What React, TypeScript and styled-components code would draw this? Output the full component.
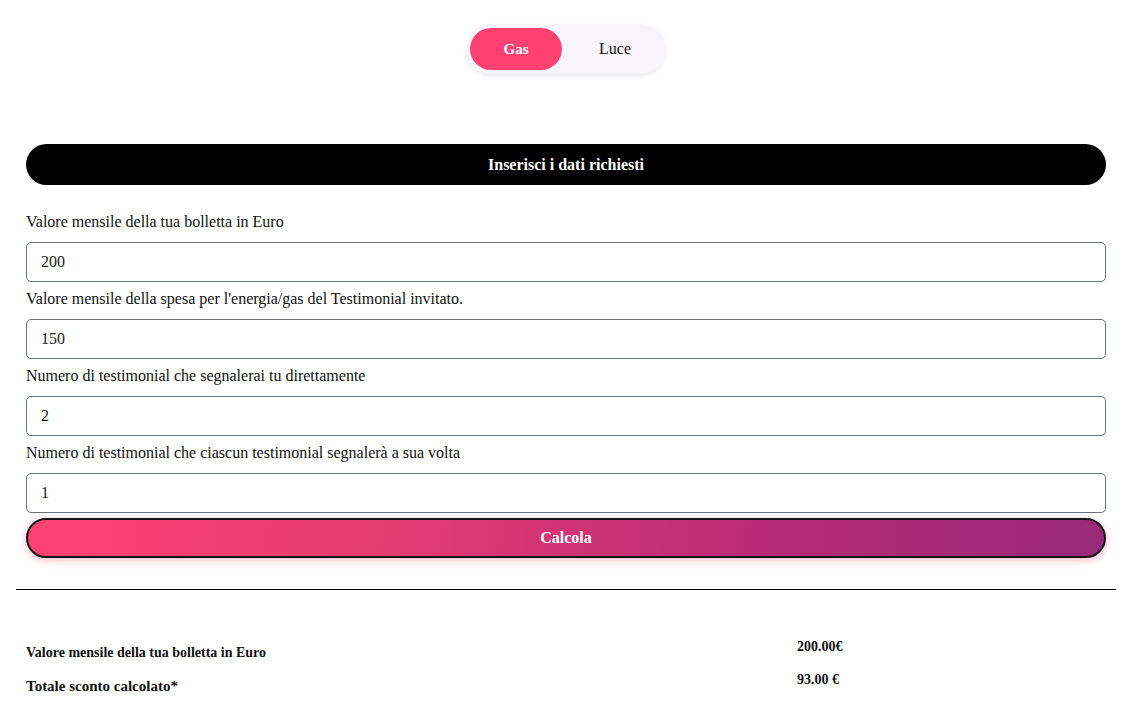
import React, { useState } from 'react';
import styled, { createGlobalStyle } from 'styled-components';

const GlobalStyle = createGlobalStyle`
  body {
    margin: 0;
    background: #fff;
    font-family: "Liberation Serif", "Times New Roman", serif;
    color: #111;
  }
`;

interface IField {
  label: string;
  value: string;
}

const fields: IField[] = [
  { label: 'Valore mensile della tua bolletta in Euro', value: '200' },
  { label: "Valore mensile della spesa per l'energia/gas del Testimonial invitato.", value: '150' },
  { label: 'Numero di testimonial che segnalerai tu direttamente', value: '2' },
  { label: 'Numero di testimonial che ciascun testimonial segnalerà a sua volta', value: '1' },
];

export default function App() {
  const [mode, setMode] = useState<'gas' | 'luce'>('gas');

  return (
    <StyledPage>
      <GlobalStyle />
      <StyledForm>
        <StyledToggleRow>
          <StyledToggle>
            <StyledToggleButton $active={mode === 'gas'} $width={92} onClick={() => setMode('gas')}>
              Gas
            </StyledToggleButton>
            <StyledToggleButton $active={mode === 'luce'} $width={100} onClick={() => setMode('luce')}>
              Luce
            </StyledToggleButton>
          </StyledToggle>
        </StyledToggleRow>

        <StyledBanner>Inserisci i dati richiesti</StyledBanner>

        <StyledFields>
          {fields.map((f) => (
            <StyledField key={f.label}>
              <StyledLabel>{f.label}</StyledLabel>
              <StyledInput defaultValue={f.value} />
            </StyledField>
          ))}
        </StyledFields>

        <StyledSubmit>Calcola</StyledSubmit>
      </StyledForm>

      <StyledRule />

      <StyledResults>
        <StyledResultRow>
          <StyledResultLabel $size={14}>Valore mensile della tua bolletta in Euro</StyledResultLabel>
          <StyledResultValue>200.00€</StyledResultValue>
        </StyledResultRow>
        <StyledResultRow>
          <StyledResultLabel $size={15}>Totale sconto calcolato*</StyledResultLabel>
          <StyledResultValue>93.00 €</StyledResultValue>
        </StyledResultRow>
      </StyledResults>
    </StyledPage>
  );
}

const StyledPage = styled.div`
  width: 1139px;
  padding-top: 24px;
`;

const StyledForm = styled.div`
  width: 1080px;
  margin-left: 26px;
`;

const StyledToggleRow = styled.div`
  display: flex;
  justify-content: center;
  margin-bottom: 70px;
`;

const StyledToggle = styled.div`
  display: flex;
  padding: 4px;
  border-radius: 26px;
  background-color: #f7f5f9;
  box-shadow: 0 2px 4px rgba(0, 0, 0, 0.08);
`;

const StyledToggleButton = styled.button<{ $active: boolean; $width: number }>`
  width: ${(p) => p.$width}px;
  height: 42px;
  padding: ${(p) => (p.$active ? '0' : '0 0 0 6px')};
  border: none;
  border-radius: 21px;
  font-family: inherit;
  font-size: ${(p) => (p.$active ? '15px' : '16px')};
  font-weight: ${(p) => (p.$active ? 700 : 400)};
  color: ${(p) => (p.$active ? '#fff' : '#111')};
  background-color: ${(p) => (p.$active ? '#ff4172' : 'transparent')};
  cursor: pointer;
`;

const StyledBanner = styled.div`
  height: 41px;
  border-radius: 21px;
  background-color: #000;
  color: #fff;
  font-size: 16px;
  font-weight: 700;
  display: flex;
  align-items: center;
  justify-content: center;
`;

const StyledFields = styled.div`
  padding-top: 28px;
`;

const StyledField = styled.div`
  display: flex;
  flex-direction: column;
`;

const StyledLabel = styled.label`
  font-size: 16px;
  line-height: 18px;
  margin-bottom: 11px;
`;

const StyledInput = styled.input`
  box-sizing: border-box;
  height: 40px;
  padding: 0 14px;
  border: 1px solid #6b717b;
  border-radius: 5px;
  font-family: inherit;
  font-size: 16px;
  color: #222;
  margin-bottom: 8px;
  outline: none;
`;

const StyledSubmit = styled.button`
  display: block;
  width: 100%;
  height: 40px;
  margin-top: -3px;
  border: 2px solid #151515;
  border-radius: 20px;
  background: linear-gradient(100deg, #ff4273 0%, #e23b73 35%, #b62a77 70%, #982a7a 100%);
  box-shadow: 0 2px 8px rgba(255, 100, 140, 0.45);
  color: #fff;
  font-family: inherit;
  font-size: 16px;
  font-weight: 700;
  cursor: pointer;
`;

const StyledRule = styled.hr`
  width: 1100px;
  margin: 31px 0 0 16px;
  border: none;
  border-top: 1px solid #000;
`;

const StyledResults = styled.div`
  margin-left: 26px;
  padding-top: 48px;
  display: flex;
  flex-direction: column;
  gap: 9px;
`;

const StyledResultRow = styled.div`
  display: grid;
  grid-template-columns: 771px auto;
  align-items: start;
`;

const StyledResultLabel = styled.div<{ $size: number }>`
  font-size: ${(p) => p.$size}px;
  font-weight: 700;
  line-height: 18px;
  padding-top: 6px;
`;

const StyledResultValue = styled.div`
  font-size: 14px;
  font-weight: 700;
  line-height: 18px;
`;
